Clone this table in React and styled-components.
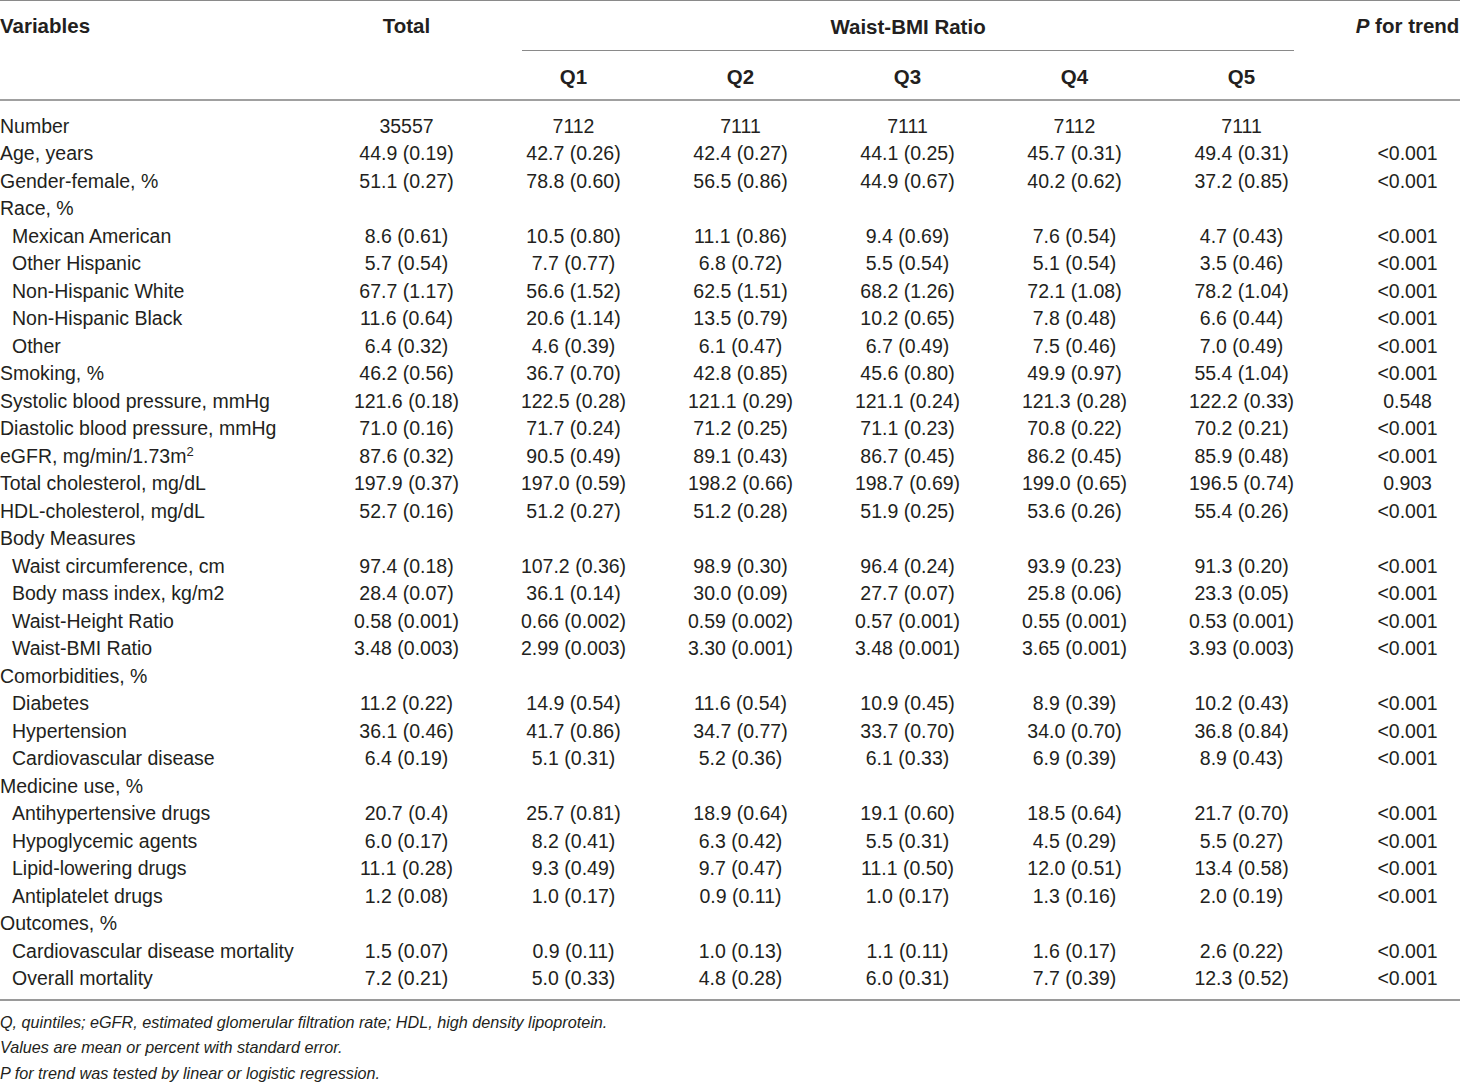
import React from 'react';
import styled, { createGlobalStyle } from 'styled-components';

const GlobalStyle = createGlobalStyle`
  body {
    margin: 0;
    background: #fff;
    color: #231f20;
    font-family: "Liberation Sans", Arial, sans-serif;
  }
`;

const Page = styled.div`
  width: 1460px;
`;

const Table = styled.table`
  width: 1460px;
  table-layout: fixed;
  border-collapse: collapse;
  border-top: 1px solid #8a8a8a;
  border-bottom: 2px solid #9a9a9a;
  font-size: 19.5px;
`;

const HeadCell = styled.th`
  font-weight: bold;
  font-size: 20.5px;
  height: 44px;
  padding: 0;
  padding-top: 4px;
  vertical-align: middle;
  white-space: nowrap;
  text-align: ${(p) => p.align || 'center'};
  padding-left: ${(p) => p.padLeft || 0}px;
  ${(p) => p.tall && 'vertical-align: top; padding-top: 13px;'}
`;

const GroupCell = styled.th`
  font-weight: bold;
  font-size: 20.5px;
  height: 50px;
  padding: 0;
  vertical-align: middle;
`;

const GroupRule = styled.div`
  margin: 0 31px 0 32px;
  height: 50px;
  display: flex;
  align-items: center;
  justify-content: center;
  border-bottom: 1px solid #8a8a8a;
  box-sizing: border-box;
  padding-top: 3px;
`;

const HeadRow = styled.tr`
  border-bottom: ${(p) => (p.ruled ? '2px solid #a0a0a0' : 'none')};
`;

const Cell = styled.td`
  padding: 0;
  line-height: 27.48px;
  white-space: nowrap;
  text-align: ${(p) => (p.label ? 'left' : 'center')};
  padding-left: ${(p) => (p.label && p.indent ? 12 : 0)}px;
  padding-left: ${(p) => (p.pcol ? '30px' : undefined)};
`;

const Row = styled.tr`
  ${(p) => p.first && 'td { padding-top: 12px; }'}
  ${(p) => p.last && 'td { padding-bottom: 6px; }'}
`;

const Notes = styled.div`
  margin-top: 9px;
  font-style: italic;
  font-size: 16.2px;
  line-height: 25.5px;
`;

const rows = [
  ['Number', false, ['35557', '7112', '7111', '7111', '7112', '7111', '']],
  ['Age, years', false, ['44.9 (0.19)', '42.7 (0.26)', '42.4 (0.27)', '44.1 (0.25)', '45.7 (0.31)', '49.4 (0.31)', '<0.001']],
  ['Gender-female, %', false, ['51.1 (0.27)', '78.8 (0.60)', '56.5 (0.86)', '44.9 (0.67)', '40.2 (0.62)', '37.2 (0.85)', '<0.001']],
  ['Race, %', false, null],
  ['Mexican American', true, ['8.6 (0.61)', '10.5 (0.80)', '11.1 (0.86)', '9.4 (0.69)', '7.6 (0.54)', '4.7 (0.43)', '<0.001']],
  ['Other Hispanic', true, ['5.7 (0.54)', '7.7 (0.77)', '6.8 (0.72)', '5.5 (0.54)', '5.1 (0.54)', '3.5 (0.46)', '<0.001']],
  ['Non-Hispanic White', true, ['67.7 (1.17)', '56.6 (1.52)', '62.5 (1.51)', '68.2 (1.26)', '72.1 (1.08)', '78.2 (1.04)', '<0.001']],
  ['Non-Hispanic Black', true, ['11.6 (0.64)', '20.6 (1.14)', '13.5 (0.79)', '10.2 (0.65)', '7.8 (0.48)', '6.6 (0.44)', '<0.001']],
  ['Other', true, ['6.4 (0.32)', '4.6 (0.39)', '6.1 (0.47)', '6.7 (0.49)', '7.5 (0.46)', '7.0 (0.49)', '<0.001']],
  ['Smoking, %', false, ['46.2 (0.56)', '36.7 (0.70)', '42.8 (0.85)', '45.6 (0.80)', '49.9 (0.97)', '55.4 (1.04)', '<0.001']],
  ['Systolic blood pressure, mmHg', false, ['121.6 (0.18)', '122.5 (0.28)', '121.1 (0.29)', '121.1 (0.24)', '121.3 (0.28)', '122.2 (0.33)', '0.548']],
  ['Diastolic blood pressure, mmHg', false, ['71.0 (0.16)', '71.7 (0.24)', '71.2 (0.25)', '71.1 (0.23)', '70.8 (0.22)', '70.2 (0.21)', '<0.001']],
  ['egfr', false, ['87.6 (0.32)', '90.5 (0.49)', '89.1 (0.43)', '86.7 (0.45)', '86.2 (0.45)', '85.9 (0.48)', '<0.001']],
  ['Total cholesterol, mg/dL', false, ['197.9 (0.37)', '197.0 (0.59)', '198.2 (0.66)', '198.7 (0.69)', '199.0 (0.65)', '196.5 (0.74)', '0.903']],
  ['HDL-cholesterol, mg/dL', false, ['52.7 (0.16)', '51.2 (0.27)', '51.2 (0.28)', '51.9 (0.25)', '53.6 (0.26)', '55.4 (0.26)', '<0.001']],
  ['Body Measures', false, null],
  ['Waist circumference, cm', true, ['97.4 (0.18)', '107.2 (0.36)', '98.9 (0.30)', '96.4 (0.24)', '93.9 (0.23)', '91.3 (0.20)', '<0.001']],
  ['Body mass index, kg/m2', true, ['28.4 (0.07)', '36.1 (0.14)', '30.0 (0.09)', '27.7 (0.07)', '25.8 (0.06)', '23.3 (0.05)', '<0.001']],
  ['Waist-Height Ratio', true, ['0.58 (0.001)', '0.66 (0.002)', '0.59 (0.002)', '0.57 (0.001)', '0.55 (0.001)', '0.53 (0.001)', '<0.001']],
  ['Waist-BMI Ratio', true, ['3.48 (0.003)', '2.99 (0.003)', '3.30 (0.001)', '3.48 (0.001)', '3.65 (0.001)', '3.93 (0.003)', '<0.001']],
  ['Comorbidities, %', false, null],
  ['Diabetes', true, ['11.2 (0.22)', '14.9 (0.54)', '11.6 (0.54)', '10.9 (0.45)', '8.9 (0.39)', '10.2 (0.43)', '<0.001']],
  ['Hypertension', true, ['36.1 (0.46)', '41.7 (0.86)', '34.7 (0.77)', '33.7 (0.70)', '34.0 (0.70)', '36.8 (0.84)', '<0.001']],
  ['Cardiovascular disease', true, ['6.4 (0.19)', '5.1 (0.31)', '5.2 (0.36)', '6.1 (0.33)', '6.9 (0.39)', '8.9 (0.43)', '<0.001']],
  ['Medicine use, %', false, null],
  ['Antihypertensive drugs', true, ['20.7 (0.4)', '25.7 (0.81)', '18.9 (0.64)', '19.1 (0.60)', '18.5 (0.64)', '21.7 (0.70)', '<0.001']],
  ['Hypoglycemic agents', true, ['6.0 (0.17)', '8.2 (0.41)', '6.3 (0.42)', '5.5 (0.31)', '4.5 (0.29)', '5.5 (0.27)', '<0.001']],
  ['Lipid-lowering drugs', true, ['11.1 (0.28)', '9.3 (0.49)', '9.7 (0.47)', '11.1 (0.50)', '12.0 (0.51)', '13.4 (0.58)', '<0.001']],
  ['Antiplatelet drugs', true, ['1.2 (0.08)', '1.0 (0.17)', '0.9 (0.11)', '1.0 (0.17)', '1.3 (0.16)', '2.0 (0.19)', '<0.001']],
  ['Outcomes, %', false, null],
  ['Cardiovascular disease mortality', true, ['1.5 (0.07)', '0.9 (0.11)', '1.0 (0.13)', '1.1 (0.11)', '1.6 (0.17)', '2.6 (0.22)', '<0.001']],
  ['Overall mortality', true, ['7.2 (0.21)', '5.0 (0.33)', '4.8 (0.28)', '6.0 (0.31)', '7.7 (0.39)', '12.3 (0.52)', '<0.001']],
];

const Sup = styled.sup`
  font-size: 13px;
  line-height: 0;
`;

const Label = ({ name }) =>
  name === 'egfr' ? (
    <>
      eGFR, mg/min/1.73m<Sup>2</Sup>
    </>
  ) : (
    name
  );

export default function App() {
  return (
    <Page>
      <GlobalStyle />
      <Table>
        <colgroup>
          <col style={{ width: 323 }} />
          <col style={{ width: 167 }} />
          <col style={{ width: 167 }} />
          <col style={{ width: 167 }} />
          <col style={{ width: 167 }} />
          <col style={{ width: 167 }} />
          <col style={{ width: 167 }} />
          <col style={{ width: 135 }} />
        </colgroup>
        <thead>
          <HeadRow>
            <HeadCell rowSpan={2} align="left" tall>Variables</HeadCell>
            <HeadCell rowSpan={2} tall>Total</HeadCell>
            <GroupCell colSpan={5}>
              <GroupRule>Waist-BMI Ratio</GroupRule>
            </GroupCell>
            <HeadCell rowSpan={2} tall padLeft={30}>
              <i>P</i> for trend
            </HeadCell>
          </HeadRow>
          <HeadRow ruled>
            <HeadCell>Q1</HeadCell>
            <HeadCell>Q2</HeadCell>
            <HeadCell>Q3</HeadCell>
            <HeadCell>Q4</HeadCell>
            <HeadCell>Q5</HeadCell>
          </HeadRow>
        </thead>
        <tbody>
          {rows.map(([name, indent, vals], i) => (
            <Row key={name} first={i === 0} last={i === rows.length - 1}>
              <Cell label indent={indent}>
                <Label name={name} />
              </Cell>
              {(vals || ['', '', '', '', '', '', '']).map((v, j) => (
                <Cell key={j} pcol={j === 6}>{v}</Cell>
              ))}
            </Row>
          ))}
        </tbody>
      </Table>
      <Notes>
        <div>Q, quintiles; eGFR, estimated glomerular filtration rate; HDL, high density lipoprotein.</div>
        <div>Values are mean or percent with standard error.</div>
        <div>P for trend was tested by linear or logistic regression.</div>
      </Notes>
    </Page>
  );
}
